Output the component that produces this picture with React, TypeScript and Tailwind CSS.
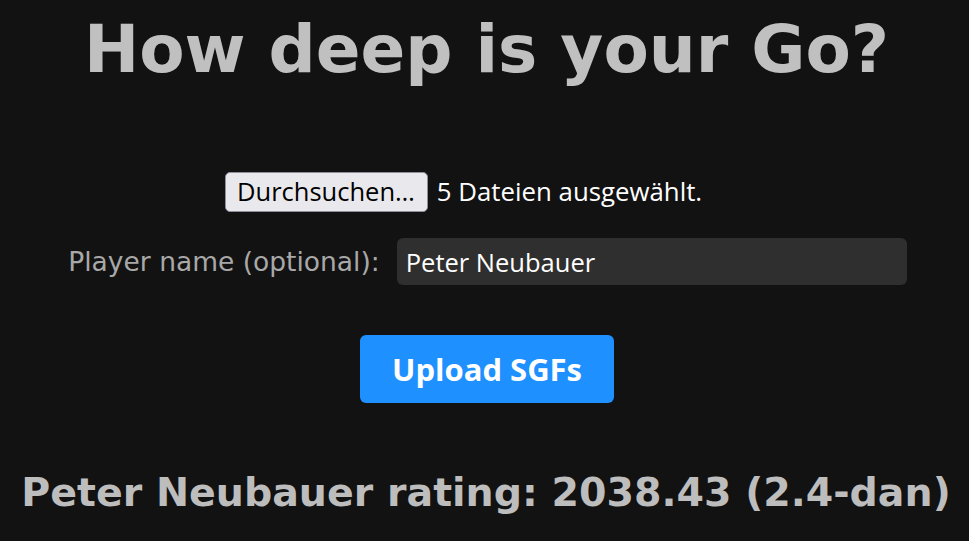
export default function App() {
  return (
    <div className="min-h-[541px] w-full bg-[#121212] flex flex-col items-center font-['DejaVu_Sans',sans-serif]">
      <h1 className="mt-[17px] ml-[4px] text-[66px] leading-none font-bold text-[#c0c0c0]">
        How deep is your Go?
      </h1>

      <div className="mt-[89px] w-[519px] flex items-center gap-[9px] font-['Open_Sans',sans-serif]">
        <button className="h-[40px] pl-[11px] pr-[12px] rounded-[5px] border border-[#8f8f9d] bg-[#e9e9ed] text-[25.5px] text-black leading-none">
          Durchsuchen…
        </button>
        <span className="text-[25.8px] text-white leading-none">5 Dateien ausgewählt.</span>
      </div>

      <div className="mt-[26px] pl-[6px] flex items-center gap-[17px]">
        <label className="text-[26.5px] text-[#a8a8a8]">Player name (optional):</label>
        <input
          defaultValue="Peter Neubauer"
          className="w-[510px] h-[47px] px-[9px] rounded-[6px] bg-[#2f2f2f] text-white text-[25.5px] font-['Open_Sans',sans-serif] outline-none"
        />
      </div>

      <button className="mt-[50px] ml-[5px] w-[254px] h-[68px] rounded-[6px] bg-[#1e90ff] text-white text-[31px] font-bold font-['Open_Sans',sans-serif]">
        Upload SGFs
      </button>

      <h2 className="mt-[70px] ml-[3px] text-[39.5px] leading-none font-bold text-[#bdbdbd]">
        Peter Neubauer rating: 2038.43 (2.4-dan)
      </h2>
    </div>
  );
}
